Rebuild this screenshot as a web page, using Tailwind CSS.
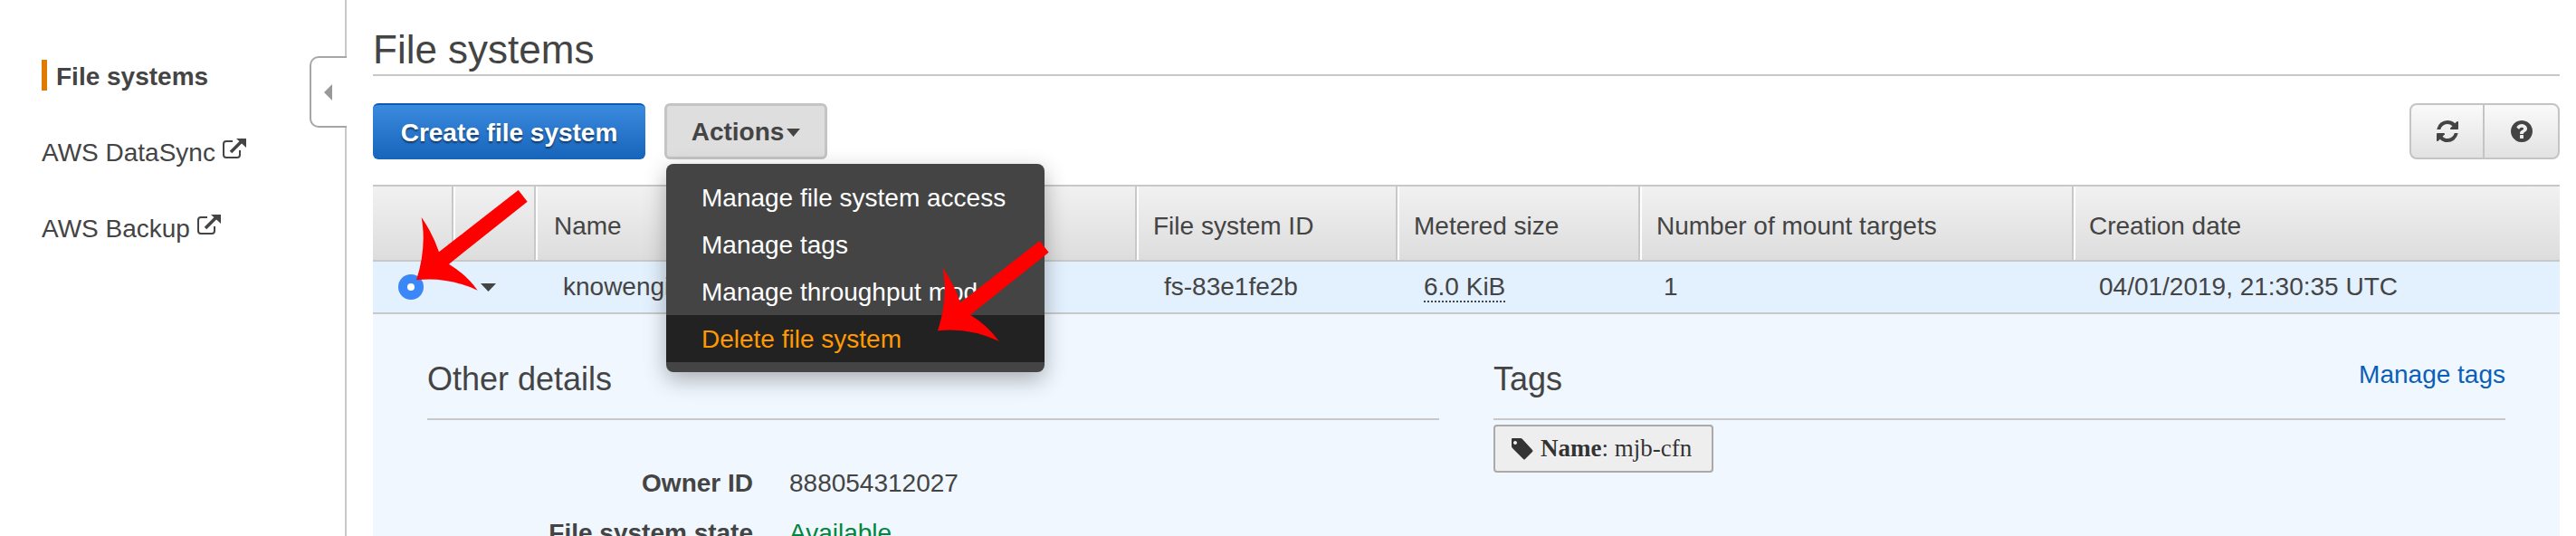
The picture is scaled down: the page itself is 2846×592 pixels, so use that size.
<!DOCTYPE html>
<html>
<head>
<meta charset="utf-8">
<script src="https://cdn.jsdelivr.net/npm/@tailwindcss/browser@4"></script>
</head>
<body class="m-0 bg-white">
<div class="relative flex w-[2846px] h-[592px] overflow-hidden bg-white text-[#444] font-['Liberation_Sans',Arial,sans-serif] text-[28px]">
  <aside class="w-[383px] h-full shrink-0 border-r-2 border-[#c8c8c8] pl-[46px] pt-[66px] flex flex-col">
    <div class="h-[34px] flex items-center border-l-[6px] border-[#e07b00] pl-[10px] pt-[3px] font-bold leading-none">File systems</div>
    <div class="mt-[50px] h-[34px] pt-[3px] flex items-center gap-[7px] leading-none">AWS DataSync
      <svg class="w-[27px] h-[25px] -mt-[8px]" viewBox="0 0 27 25" fill="none"><path d="M12 4H5a3 3 0 0 0-3 3v12a3 3 0 0 0 3 3h12a3 3 0 0 0 3-3v-5" stroke="#444" stroke-width="2"/><path d="M10 16 22 4" stroke="#444" stroke-width="3.500"/><path d="M16 1h11v10z" fill="#444"/></svg>
    </div>
    <div class="mt-[50px] h-[34px] pt-[3px] flex items-center gap-[7px] leading-none">AWS Backup
      <svg class="w-[27px] h-[25px] -mt-[8px]" viewBox="0 0 27 25" fill="none"><path d="M12 4H5a3 3 0 0 0-3 3v12a3 3 0 0 0 3 3h12a3 3 0 0 0 3-3v-5" stroke="#444" stroke-width="2"/><path d="M10 16 22 4" stroke="#444" stroke-width="3.500"/><path d="M16 1h11v10z" fill="#444"/></svg>
    </div>
  </aside>

  <main class="flex-1 pl-[29px] pr-[18px]">
    <h1 class="h-[84px] border-b-2 border-[#c8c8c8] text-[44px] leading-none font-normal pt-[33px]">File systems</h1>
    <div class="mt-[30px] h-[62px] flex items-stretch">
      <button class="w-[301px] pt-[2px] rounded-[6px] border-t-2 border-[#0a5bb3] bg-gradient-to-b from-[#3a8ade] to-[#1665bb] text-white font-bold [text-shadow:0_2px_2px_rgba(0,0,0,.5)]">Create file system</button>
      <button class="ml-[21px] w-[180px] pt-[2px] rounded-[6px] border-[3px] border-[#c4c4c4] bg-[#dedede] font-bold flex items-center justify-center gap-[3px]">Actions<svg class="w-[15px] h-[9px]" viewBox="0 0 15 9"><path d="M0 0h15L7.500 9z" fill="#444"/></svg></button>
      <div class="ml-auto w-[166px] flex rounded-[8px] border-2 border-[#c4c4c4] bg-gradient-to-b from-[#fafafa] to-[#e2e2e2]">
        <div class="flex-1 flex items-center justify-center border-r-2 border-[#c4c4c4]">
          <svg class="w-[28px] h-[28px]" viewBox="0 0 1792 1792"><path fill="#444" d="M1639 1056q0 5-1 7-64 268-268 434.5t-478 166.5q-146 0-282.500-55t-243.500-157l-129 129q-19 19-45 19t-45-19-19-45v-448q0-26 19-45t45-19h448q26 0 45 19t19 45-19 45l-137 137q71 66 161 102t187 36q134 0 250-65t186-179q11-17 53-117 8-23 30-23h192q13 0 22.500 9.500t9.500 22.500zm25-800v448q0 26-19 45t-45 19h-448q-26 0-45-19t-19-45 19-45l138-138q-148-137-349-137-134 0-250 65t-186 179q-11 17-53 117-8 23-30 23h-199q-13 0-22.500-9.500t-9.500-22.500v-7q65-268 270-434.500t480-166.500q146 0 284 55.500t245 156.500l130-129q19-19 45-19t45 19 19 45z"/></svg>
        </div>
        <div class="w-[81px] flex items-center justify-center">
          <svg class="w-[28px] h-[28px]" viewBox="0 0 1792 1792"><path fill="#444" d="M1024 1376v-192q0-14-9-23t-23-9h-192q-14 0-23 9t-9 23v192q0 14 9 23t23 9h192q14 0 23-9t9-23zm256-672q0-88-55.500-163t-138.500-116-170-41q-243 0-371 213-15 24 8 42l132 100q7 6 19 6 16 0 25-12 53-68 86-92 34-24 86-24 48 0 85.500 26t37.500 59q0 38-20 61t-68 45q-63 28-115.500 86.500t-52.500 125.500v36q0 14 9 23t23 9h192q14 0 23-9t9-23q0-19 21.500-49.500t54.500-49.500q32-18 49-28.500t46-35 44.500-48 28-60.500 12.500-81zm384 192q0 209-103 385.500t-279.500 279.500-385.500 103-385.500-103-279.500-279.500-103-385.500 103-385.500 279.500-279.500 385.500-103 385.500 103 279.500 279.500 103 385.500z"/></svg>
        </div>
      </div>
    </div>

    <div class="mt-[28px] grid grid-cols-[89px_91px_664px_288px_268px_479px_1fr] h-[85px] border-t-2 border-b-2 border-[#c8c8c8] bg-gradient-to-b from-[#f1f1f1] to-[#dddddd]">
      <div class="border-r-2 border-[#c8c8c8]"></div>
      <div class="border-l-2 border-r-2 border-l-white border-r-[#c8c8c8]"></div>
      <div class="border-l-2 border-r-2 border-l-white border-r-[#c8c8c8] pl-[18px] pt-[7px] flex items-center">Name</div>
      <div class="border-l-2 border-r-2 border-l-white border-r-[#c8c8c8] pl-[16px] pt-[7px] flex items-center">File system ID</div>
      <div class="border-l-2 border-r-2 border-l-white border-r-[#c8c8c8] pl-[16px] pt-[7px] flex items-center">Metered size</div>
      <div class="border-l-2 border-r-2 border-l-white border-r-[#c8c8c8] pl-[16px] pt-[7px] flex items-center">Number of mount targets</div>
      <div class="border-l-2 border-l-white pl-[15px] pt-[7px] flex items-center">Creation date</div>
    </div>
    <div class="grid grid-cols-[89px_91px_664px_288px_268px_479px_1fr] h-[58px] border-b-2 border-[#c8c8c8] bg-[#e3f0fd] items-center">
      <div class="pl-[28px]"><div class="w-[28px] h-[28px] rounded-full bg-[#3b87f7] flex items-center justify-center"><div class="w-[8px] h-[8px] rounded-full bg-white"></div></div></div>
      <div class="pl-[30px]"><svg class="w-[17px] h-[9px] block" viewBox="0 0 17 9"><path d="M0 0h17L8.500 9z" fill="#444"/></svg></div>
      <div class="pl-[30px]">knowengine</div>
      <div class="pl-[30px]">fs-83e1fe2b</div>
      <div class="pl-[29px]"><span class="border-b-2 border-dotted border-[#444]">6.0 KiB</span></div>
      <div class="pl-[26px]">1</div>
      <div class="pl-[28px]">04/01/2019, 21:30:35 UTC</div>
    </div>

    <div class="h-[300px] bg-[#f0f7fe] pl-[60px] pr-[60px] pt-[50px] flex gap-[60px]">
      <section class="w-[1118px]">
        <h2 class="h-[67px] border-b-2 border-[#c8c8c8] text-[36px] leading-[44px] font-normal">Other details</h2>
        <div class="mt-[50px] flex items-center leading-[40px]"><span class="w-[360px] text-right font-bold">Owner ID</span><span class="ml-[40px]">888054312027</span></div>
        <div class="mt-[15px] flex items-center leading-[40px]"><span class="w-[360px] text-right font-bold">File system state</span><span class="ml-[40px] text-[#00873d]">Available</span></div>
      </section>
      <section class="flex-1">
        <div class="h-[67px] border-b-2 border-[#c8c8c8] flex justify-between">
          <h2 class="text-[36px] leading-[44px] font-normal">Tags</h2>
          <a class="text-[#0b5fb8] leading-[34px]">Manage tags</a>
        </div>
        <div class="mt-[5px] w-[243px] h-[53px] rounded-[4px] border-2 border-[#aaa] bg-[#eeeeee] flex items-center pl-[16px] gap-[8px] font-['Liberation_Serif',serif] text-[27px] text-[#333] [text-shadow:0_1px_1px_#fff]">
          <svg class="w-[26px] h-[26px] shrink-0" viewBox="0 0 26 26"><path fill-rule="evenodd" fill="#333" d="M3 1h9q1 0 2 1l11 12q1 1 0 2l-8 8q-1 1-2 0L3 12q-1-1-1-2V2q0-1 1-1zm3 3a2 2 0 1 0 .01 0z"/></svg>
          <span><b>Name</b>: mjb-cfn</span>
        </div>
      </section>
    </div>
  </main>

  <div class="absolute left-[342px] top-[62px] w-[41px] h-[79px] rounded-l-[10px] border-2 border-r-0 border-[#a6a6a6] bg-white flex items-center pl-[14px]">
    <svg class="w-[9px] h-[18px]" viewBox="0 0 9 18"><path d="M9 0v18L0 9z" fill="#999"/></svg>
  </div>

  <div class="absolute left-[736px] top-[181px] w-[418px] h-[230px] rounded-[8px] bg-[#444] text-white shadow-[0_8px_24px_rgba(0,0,0,.3)] pt-[11px]">
    <div class="h-[52px] pl-[39px] pt-[1px] flex items-center">Manage file system access</div>
    <div class="h-[52px] pl-[39px] pt-[1px] flex items-center">Manage tags</div>
    <div class="h-[52px] pl-[39px] pt-[1px] flex items-center">Manage throughput mode</div>
    <div class="h-[52px] pl-[39px] pt-[1px] flex items-center bg-[#222] text-[#ff9900]">Delete file system</div>
  </div>

  <svg class="absolute left-0 top-0 w-[2846px] h-[592px] pointer-events-none" viewBox="0 0 2846 592">
    <g fill="#ff0000">
      <path transform="translate(400 190) scale(.3333)" d="M518 60 548 98 288 305Q345 340 383 392 280 345 180 358 215 250 197 150 235 205 255 265Z"/>
      <path transform="translate(976 246) scale(.3333)" d="M518 60 548 98 288 305Q345 340 383 392 280 345 180 358 215 250 197 150 235 205 255 265Z"/>
    </g>
  </svg>
</div>
</body>
</html>
